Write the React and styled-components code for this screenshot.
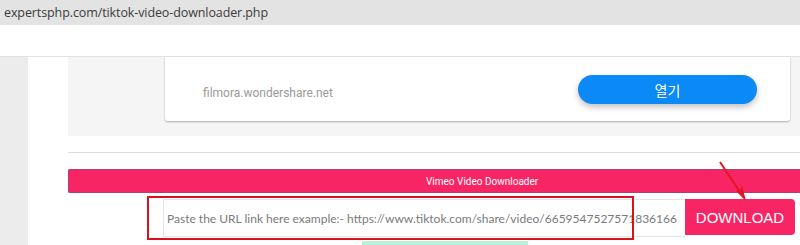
import React from 'react';
import styled, { createGlobalStyle } from 'styled-components';

const GlobalStyle = createGlobalStyle`
  html, body {
    margin: 0;
    padding: 0;
    background: #fff;
    overflow: hidden;
  }
  body {
    width: 800px;
    height: 245px;
    font-family: 'Open Sans', 'Noto Sans', sans-serif;
  }
`;

const AddressBar = styled.div`
  height: 25px;
  background: #e3e3e3;
  display: flex;
  align-items: center;
  padding-left: 4px;
  font-family: 'Open Sans', sans-serif;
  font-size: 12.5px;
  color: #3b3b3b;
  letter-spacing: -0.1px;
`;

const TopGap = styled.div`
  height: 31px;
  border-bottom: 1px solid #e2e2e2;
`;

const Main = styled.div`
  display: flex;
  height: 188px;
  position: relative;
`;

const Gutter = styled.div`
  width: 28px;
  background: #ececec;
`;

const Spacer = styled.div`
  width: 40px;
  background: #fff;
`;

const Content = styled.div`
  flex: 1;
  display: flex;
  flex-direction: column;
`;

const AdPanel = styled.div`
  height: 80px;
  background: #f5f5f5;
  padding-left: 97px;
`;

const AdCard = styled.div`
  height: 64px;
  width: 625px;
  background: #fff;
  border-radius: 0 0 3px 3px;
  box-shadow: 0 1px 2px rgba(0, 0, 0, 0.3);
  display: flex;
  align-items: center;
  justify-content: space-between;
  padding: 0 33px 0 38px;
  box-sizing: border-box;
`;

const AdHost = styled.span`
  font-family: Roboto, sans-serif;
  font-size: 12px;
  color: #9a9a9a;
  margin-top: 8px;
`;

const OpenButton = styled.div`
  width: 179px;
  height: 29px;
  border-radius: 15px;
  background: #0a89f7;
  color: #fff;
  display: flex;
  align-items: center;
  justify-content: center;
  font-family: 'Noto Sans CJK KR', sans-serif;
  font-size: 14px;
  box-shadow: 0 3px 6px rgba(0, 0, 0, 0.25);
  margin-top: 1px;
`;

const Divider = styled.div`
  margin-top: 16px;
  border-top: 1px solid #dcdcdc;
`;

const TitleBar = styled.div`
  margin-top: 16px;
  height: 22px;
  background: #f72563;
  border: 1px solid #a8407a;
  border-right: none;
  border-radius: 2px 0 0 2px;
  color: #fff;
  font-family: Roboto, sans-serif;
  font-size: 10px;
  display: flex;
  align-items: center;
  padding-left: 357px;
`;

const InputRow = styled.div`
  margin-top: 6px;
  padding-left: 95px;
  display: flex;
  align-items: flex-start;
`;

const UrlInput = styled.div`
  width: 522px;
  height: 38px;
  box-sizing: border-box;
  border: 1px solid #e4e4e4;
  border-right: none;
  background: #fff;
  display: flex;
  align-items: center;
  padding-left: 3px;
  font-family: Lato, sans-serif;
  font-size: 12px;
  color: #7a7a7a;
  white-space: nowrap;
  overflow: hidden;
`;

const DownloadButton = styled.div`
  width: 110px;
  height: 36px;
  background: #f72563;
  border-radius: 0 4px 4px 0;
  color: #fff;
  display: flex;
  align-items: center;
  justify-content: center;
  font-family: 'Liberation Sans', Arial, sans-serif;
  font-size: 15px;
`;

const StatusRow = styled.div`
  margin-top: 4px;
  padding-left: 294px;
  display: flex;
`;

const GreenStrip = styled.div`
  width: 166px;
  height: 4px;
  background: #b4f3d9;
`;

const Highlight = styled.div`
  position: absolute;
  left: 147px;
  top: 139px;
  width: 487px;
  height: 44px;
  box-sizing: border-box;
  border: 2px solid #d8111b;
  pointer-events: none;
`;

const Arrow = styled.svg`
  position: absolute;
  left: 712px;
  top: 103px;
  pointer-events: none;
`;

export default function App() {
  return (
    <>
      <GlobalStyle />
      <AddressBar>expertsphp.com/tiktok-video-downloader.php</AddressBar>
      <TopGap />
      <Main>
        <Gutter />
        <Spacer />
        <Content>
          <AdPanel>
            <AdCard>
              <AdHost>filmora.wondershare.net</AdHost>
              <OpenButton>열기</OpenButton>
            </AdCard>
          </AdPanel>
          <Divider />
          <TitleBar>Vimeo Video Downloader</TitleBar>
          <InputRow>
            <UrlInput>Paste the URL link here example:- https://www.tiktok.com/share/video/6659547527571836166</UrlInput>
            <DownloadButton>DOWNLOAD</DownloadButton>
          </InputRow>
          <StatusRow>
            <GreenStrip />
          </StatusRow>
        </Content>
        <Highlight />
        <Arrow width="44" height="44" viewBox="0 0 44 44">
          <line x1="8" y1="2" x2="32" y2="38" stroke="#e5141f" strokeWidth="2" />
          <path d="M34 41 L24 31 L28 30 L30 26 Z" fill="#e5141f" />
        </Arrow>
      </Main>
    </>
  );
}
